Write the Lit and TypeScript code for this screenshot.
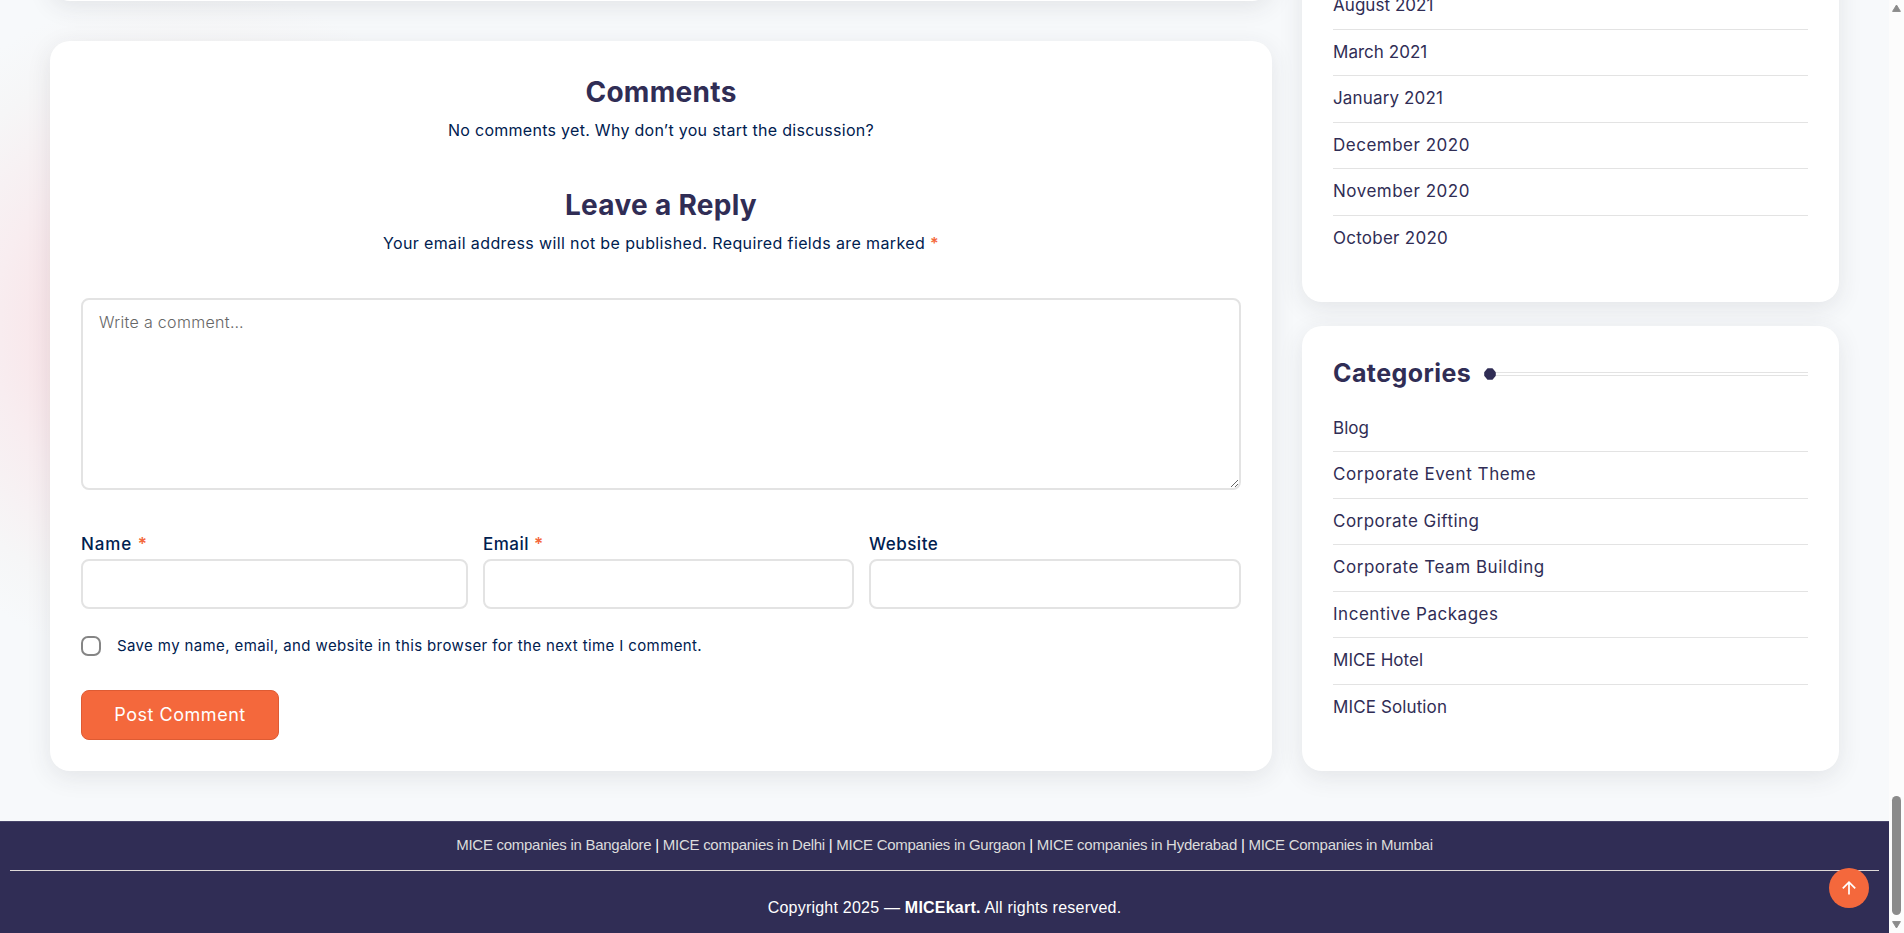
import { LitElement, html, css } from "lit";
import { customElement } from "lit/decorators.js";
import { styleMap } from "lit/directives/style-map.js";

type Entry = { label: string; tracking: number };

const archives: Entry[] = [
  { label: "August 2021", tracking: 0.05 },
  { label: "March 2021", tracking: 0.03 },
  { label: "January 2021", tracking: 0.15 },
  { label: "December 2020", tracking: 0.5 },
  { label: "November 2020", tracking: 0.5 },
  { label: "October 2020", tracking: 0.25 },
];

const categories: Entry[] = [
  { label: "Blog", tracking: 0.05 },
  { label: "Corporate Event Theme", tracking: 0.56 },
  { label: "Corporate Gifting", tracking: 0.46 },
  { label: "Corporate Team Building", tracking: 0.54 },
  { label: "Incentive Packages", tracking: 0.52 },
  { label: "MICE Hotel", tracking: 0.06 },
  { label: "MICE Solution", tracking: 0.12 },
];

const cities = [
  "MICE companies in Bangalore",
  "MICE companies in Delhi",
  "MICE Companies in Gurgaon",
  "MICE companies in Hyderabad",
  "MICE Companies in Mumbai",
];

@customElement("app-root")
export class AppRoot extends LitElement {
  static styles = css`
    :host {
      display: flex;
      width: 100%;
      height: 933px;
      overflow: hidden;
      color: #00204f;
      font-family: Inter, "Open Sans", sans-serif;
      font-size: 16px;
    }
    * {
      box-sizing: border-box;
    }
    .page {
      flex: 1;
      min-width: 0;
      position: relative;
    }
    .content {
      display: grid;
      grid-template-columns: 1222px 537px;
      gap: 30px;
      height: 821px;
      padding: 0 50px 50px;
      overflow: hidden;
      background:
        radial-gradient(circle 340px at 190px 330px, #fadbe1 0%, #f9e3e7 35%, #f8edf0 58%, #f6f6f7 84%, #f7f9fb 100%) no-repeat
        #f7f9fb;
    }
    .column {
      display: flex;
      flex-direction: column;
      justify-content: flex-end;
      height: 771px;
    }
    .main {
      gap: 40px;
    }
    .side {
      gap: 24px;
    }
    .card {
      flex: none;
      background: #fff;
      border-radius: 20px;
      padding: 33px 31px 31px;
      box-shadow: 0 6px 24px rgba(45, 45, 60, 0.1);
    }
    .side .card {
      padding: 31px 31px 39.5px;
    }
    .post {
      height: 200px;
    }
    h2,
    h3,
    p,
    ul {
      margin: 0;
      padding: 0;
    }
    h2 {
      color: #302d55;
      font-size: 28px;
      line-height: 36px;
      font-weight: 700;
      text-align: center;
      letter-spacing: 0.3px;
    }
    .note {
      margin-top: 6px;
      line-height: 28px;
      text-align: center;
      letter-spacing: 0.28px;
    }
    .reply {
      margin-top: 43px;
    }
    .note.wide {
      letter-spacing: 0.38px;
      margin-bottom: 41px;
    }
    .req {
      color: #f4683c;
      font-weight: 600;
    }
    .box {
      display: block;
      width: 100%;
      margin: 0;
      border: 2px solid #e3e3e3;
      border-radius: 8px;
      background: #fff;
      outline: 0;
      font: 300 16px/26px Inter, sans-serif;
      letter-spacing: 0.32px;
      padding: 9px 16px;
    }
    .area {
      height: 192px;
    }
    .box::placeholder {
      color: #666;
      opacity: 1;
    }
    .fields {
      display: grid;
      grid-template-columns: 387px 371px 372px;
      gap: 15px;
      margin-top: 41px;
    }
    .label {
      display: block;
      height: 28px;
      line-height: 27px;
      font-size: 17px;
      font-weight: 500;
      letter-spacing: 0.5px;
    }
    .label.name {
      letter-spacing: 0.9px;
    }
    .input {
      height: 50px;
    }
    .consent {
      display: flex;
      align-items: center;
      gap: 16px;
      margin-top: 27px;
      height: 20px;
      font-size: 15px;
      line-height: 19px;
      padding-bottom: 1px;
      letter-spacing: 0.38px;
      white-space: nowrap;
    }
    .check {
      appearance: none;
      flex: none;
      width: 20px;
      height: 20px;
      margin: 1px 0 0;
      border: 2px solid #858585;
      border-radius: 7px;
      background: #fff;
    }
    .submit {
      display: block;
      width: 198px;
      height: 50px;
      margin-top: 34px;
      padding: 0 0 2px;
      border: 1px solid #de5b33;
      border-radius: 8px;
      background: #f4683c;
      color: #fff;
      font: 400 18px Inter, sans-serif;
      letter-spacing: 0.53px;
    }
    .title {
      display: flex;
      align-items: center;
      height: 33px;
      margin-bottom: 15.5px;
    }
    h3 {
      color: #302d55;
      font-size: 25px;
      line-height: 33px;
      font-weight: 700;
      letter-spacing: 0.42px;
      width: 151px;
    }
    .hex {
      width: 12px;
      height: 12px;
      flex: none;
    }
    .rule {
      flex: 1;
      height: 4px;
      border: solid #e3e3e3;
      border-width: 1px 0;
    }
    ul {
      list-style: none;
    }
    li {
      height: 46.57px;
      border-bottom: 1px solid #e3e3e3;
      color: #302d55;
      font-size: 17px;
      line-height: 44.6px;
    }
    li:last-child {
      border-bottom-color: transparent;
    }
    footer {
      height: 112px;
      border-top: 1px solid #47446a;
      background: #302d55;
      color: #fff;
      font-family: "Liberation Sans", Arial, sans-serif;
      text-align: center;
      padding: 0 10px;
    }
    .links {
      height: 49px;
      line-height: 45px;
      border-bottom: 1px solid #ded9d8;
      font-size: 15px;
      letter-spacing: -0.275px;
      white-space: pre;
    }
    .links a {
      color: #dcdcdc;
    }
    .copy {
      font-size: 16px;
      line-height: 24px;
      padding-top: 25px;
      letter-spacing: 0.22px;
    }
    .top {
      position: absolute;
      right: 20px;
      bottom: 25px;
      width: 40px;
      height: 40px;
      border-radius: 50%;
      background: #f4683c;
      display: flex;
      align-items: center;
      justify-content: center;
    }
    .scroll {
      width: 15px;
      height: 933px;
      background: #fcfcfc;
      display: flex;
      flex-direction: column;
      align-items: center;
    }
    .scroll svg {
      flex: none;
      display: block;
    }
    .up {
      margin-top: 4px;
    }
    .thumb {
      width: 9px;
      height: 119px;
      margin: auto 0 6px;
      border-radius: 5px;
      background: #8b8b8b;
    }
    .down {
      margin-bottom: 4px;
    }
  `;

  private list(entries: Entry[]) {
    return html`<ul>
      ${entries.map(
        (e) => html`<li style=${styleMap({ letterSpacing: `${e.tracking}px` })}>${e.label}</li>`
      )}
    </ul>`;
  }

  render() {
    return html`
      <div class="page">
        <div class="content">
          <div class="column main">
            <div class="card post"></div>
            <section class="card">
              <h2>Comments</h2>
              <p class="note">No comments yet. Why don’t you start the discussion?</p>
              <h2 class="reply">Leave a Reply</h2>
              <p class="note wide">
                Your email address will not be published. Required fields are marked <span class="req">*</span>
              </p>
              <textarea class="box area" placeholder="Write a comment…"></textarea>
              <div class="fields">
                <label><span class="label name">Name <span class="req">*</span></span><input class="box input" /></label>
                <label><span class="label">Email <span class="req">*</span></span><input class="box input" /></label>
                <label><span class="label">Website</span><input class="box input" /></label>
              </div>
              <label class="consent">
                <input class="check" type="checkbox" />
                <span>Save my name, email, and website in this browser for the next time I comment.</span>
              </label>
              <button class="submit">Post Comment</button>
            </section>
          </div>
          <aside class="column side">
            <section class="card">${this.list(archives)}</section>
            <section class="card">
              <div class="title">
                <h3>Categories</h3>
                <svg class="hex" viewBox="0 0 12 12"><path d="M3.9 1h4.2L11 4.6v2.8L8.1 11H3.9L1 7.4V4.6z" fill="#302d55" stroke="#302d55" stroke-width="1.6" stroke-linejoin="round" /></svg>
                <div class="rule"></div>
              </div>
              ${this.list(categories)}
            </section>
          </aside>
        </div>
        <footer>
          <div class="links">${cities.map((c, i) => html`${i ? " | " : ""}<a>${c}</a>`)}</div>
          <div class="copy">Copyright 2025 — <b>MICEkart.</b> All rights reserved.</div>
        </footer>
        <div class="top">
          <svg width="14" height="14" viewBox="0 0 14 14" fill="none" stroke="#fff" stroke-width="1.7">
            <path d="M7 13.6V1.4M.8 7.4 7 1.2l6.2 6.2" />
          </svg>
        </div>
      </div>
      <div class="scroll">
        <svg class="up" width="9" height="8" viewBox="0 0 9 8"><path d="M4.5 1 8.4 7.4H.6z" fill="#8b8b8b" stroke="#8b8b8b" stroke-linejoin="round" /></svg>
        <div class="thumb"></div>
        <svg class="down" width="9" height="8" viewBox="0 0 9 8"><path d="M4.5 7 .6 .6h7.8z" fill="#8b8b8b" stroke="#8b8b8b" stroke-linejoin="round" /></svg>
      </div>
    `;
  }
}
